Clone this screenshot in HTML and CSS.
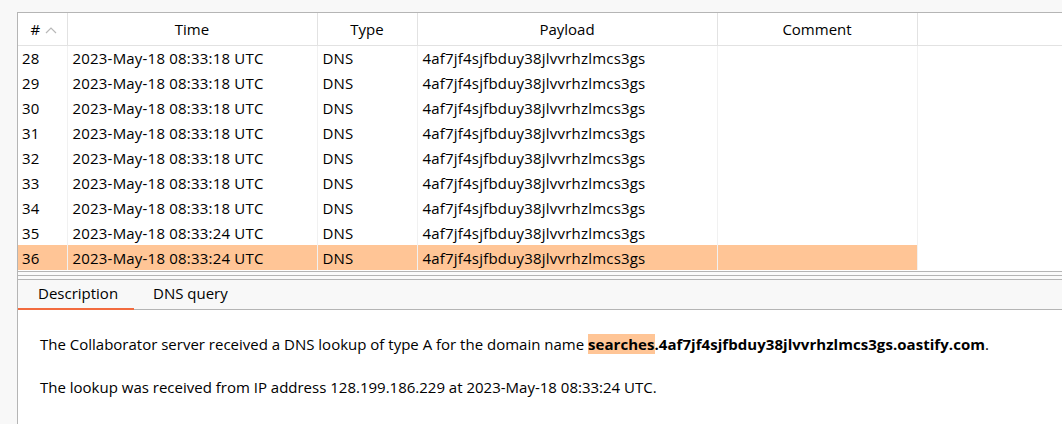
FILE: index.html
```html
<!DOCTYPE html>
<html>
<head>
<meta charset="utf-8">
<link rel="stylesheet" href="styles.css">
</head>
<body>
<div class="frame">
  <div class="table-panel">
    <table class="grid">
      <colgroup>
        <col class="c-num"><col class="c-time"><col class="c-type"><col class="c-payload"><col class="c-comment"><col class="c-rest">
      </colgroup>
      <thead>
        <tr>
          <th class="th-num"><span class="hash">#</span><svg class="sort" width="12" height="8" viewBox="0 0 12 8"><polyline points="1,7 6,2 11,7" fill="none" stroke="#b8b8b8" stroke-width="1.2"/></svg></th>
          <th>Time</th>
          <th>Type</th>
          <th>Payload</th>
          <th>Comment</th>
          <th></th>
        </tr>
      </thead>
      <tbody>
        <tr><td>28</td><td>2023-May-18 08:33:18 UTC</td><td>DNS</td><td>4af7jf4sjfbduy38jlvvrhzlmcs3gs</td><td></td><td class="rest"></td></tr>
        <tr><td>29</td><td>2023-May-18 08:33:18 UTC</td><td>DNS</td><td>4af7jf4sjfbduy38jlvvrhzlmcs3gs</td><td></td><td class="rest"></td></tr>
        <tr><td>30</td><td>2023-May-18 08:33:18 UTC</td><td>DNS</td><td>4af7jf4sjfbduy38jlvvrhzlmcs3gs</td><td></td><td class="rest"></td></tr>
        <tr><td>31</td><td>2023-May-18 08:33:18 UTC</td><td>DNS</td><td>4af7jf4sjfbduy38jlvvrhzlmcs3gs</td><td></td><td class="rest"></td></tr>
        <tr><td>32</td><td>2023-May-18 08:33:18 UTC</td><td>DNS</td><td>4af7jf4sjfbduy38jlvvrhzlmcs3gs</td><td></td><td class="rest"></td></tr>
        <tr><td>33</td><td>2023-May-18 08:33:18 UTC</td><td>DNS</td><td>4af7jf4sjfbduy38jlvvrhzlmcs3gs</td><td></td><td class="rest"></td></tr>
        <tr><td>34</td><td>2023-May-18 08:33:18 UTC</td><td>DNS</td><td>4af7jf4sjfbduy38jlvvrhzlmcs3gs</td><td></td><td class="rest"></td></tr>
        <tr><td>35</td><td>2023-May-18 08:33:24 UTC</td><td>DNS</td><td>4af7jf4sjfbduy38jlvvrhzlmcs3gs</td><td></td><td class="rest"></td></tr>
        <tr class="selected"><td>36</td><td>2023-May-18 08:33:24 UTC</td><td>DNS</td><td>4af7jf4sjfbduy38jlvvrhzlmcs3gs</td><td></td><td class="rest"></td></tr>
      </tbody>
    </table>
  </div>
  <div class="splitter"><div class="splitter-line"></div></div>
  <div class="detail-panel">
    <div class="tabs">
      <div class="tab active">Description</div>
      <div class="tab">DNS query</div>
    </div>
    <div class="detail-body">
      <p>The Collaborator server received a DNS lookup of type A for the domain name <b><span class="hl">searches</span>.4af7jf4sjfbduy38jlvvrhzlmcs3gs.oastify.com</b>.</p>
      <p>The lookup was received from IP address 128.199.186.229 at 2023-May-18 08:33:24 UTC.</p>
    </div>
  </div>
</div>
</body>
</html>
```

FILE: styles.css
```css
html, body {
  margin: 0;
  padding: 0;
  background: #f8f8f8;
  height: 100%;
  overflow: hidden;
}
body {
  font-family: "Open Sans", "Noto Sans", sans-serif;
  font-size: 15px;
  color: #000;
}
.frame {
  margin: 12px 0 0 17px;
  border-left: 1px solid #b5b5b5;
  border-top: 1px solid #b5b5b5;
  height: 412px;
  display: flex;
  flex-direction: column;
}
.table-panel {
  background: #fff;
  height: 258px;
  border-bottom: 1px solid #b5b5b5;
}
.grid {
  border-collapse: collapse;
  table-layout: fixed;
  width: 100%;
  letter-spacing: 0.2px;
}
.c-num { width: 49px; }
.c-time { width: 250px; }
.c-type { width: 100px; }
.c-payload { width: 300px; }
.c-comment { width: 200px; }
.grid th {
  height: 32px;
  padding: 1px 0 0 0;
  font-weight: normal;
  text-align: center;
  border-right: 1px solid #e2e2e2;
  border-bottom: 1px solid #e2e2e2;
  box-sizing: border-box;
  letter-spacing: 0;
}
.grid th:last-child { border-right: none; }
.th-num { white-space: nowrap; }
.hash { margin-left: 3px; }
.sort { margin-left: 5px; vertical-align: 1px; }
.grid td {
  height: 25px;
  padding: 1px 0 0 5px;
  white-space: nowrap;
  border-right: 1px solid #f1f1f1;
  box-sizing: border-box;
}
.grid td:first-child { padding-left: 4px; }
.grid td.rest { border-right: none; }
.grid tr.selected td { background: #ffc596; }
.grid tr.selected td.rest { background: #fff; }
.splitter {
  height: 7px;
  background: #fbfbfb;
  border-bottom: 1px solid #b5b5b5;
  display: flex;
  align-items: center;
}
.splitter-line {
  height: 1px;
  width: 100%;
  background: #b5b5b5;
}
.detail-panel {
  flex: 1;
  display: flex;
  flex-direction: column;
  background: #fff;
}
.tabs {
  height: 30px;
  background: #f8f8f8;
  border-bottom: 1px solid #b5b5b5;
  display: flex;
  box-sizing: border-box;
}
.tab {
  padding: 0 20px;
  line-height: 27px;
  height: 30px;
  box-sizing: border-box;
  white-space: nowrap;
}
.tab.active {
  width: 116px;
  padding-left: 20px;
  border-bottom: 2px solid #f26b3f;
}
.tab + .tab { padding-left: 19px; }
.detail-body {
  padding: 24px 0 0 22px;
}
.detail-body p {
  margin: 0 0 23px 0;
  line-height: 20px;
  white-space: nowrap;
}
.detail-body b { font-weight: bold; letter-spacing: 0.05px; }
.hl { background: #ffc596; }
```
